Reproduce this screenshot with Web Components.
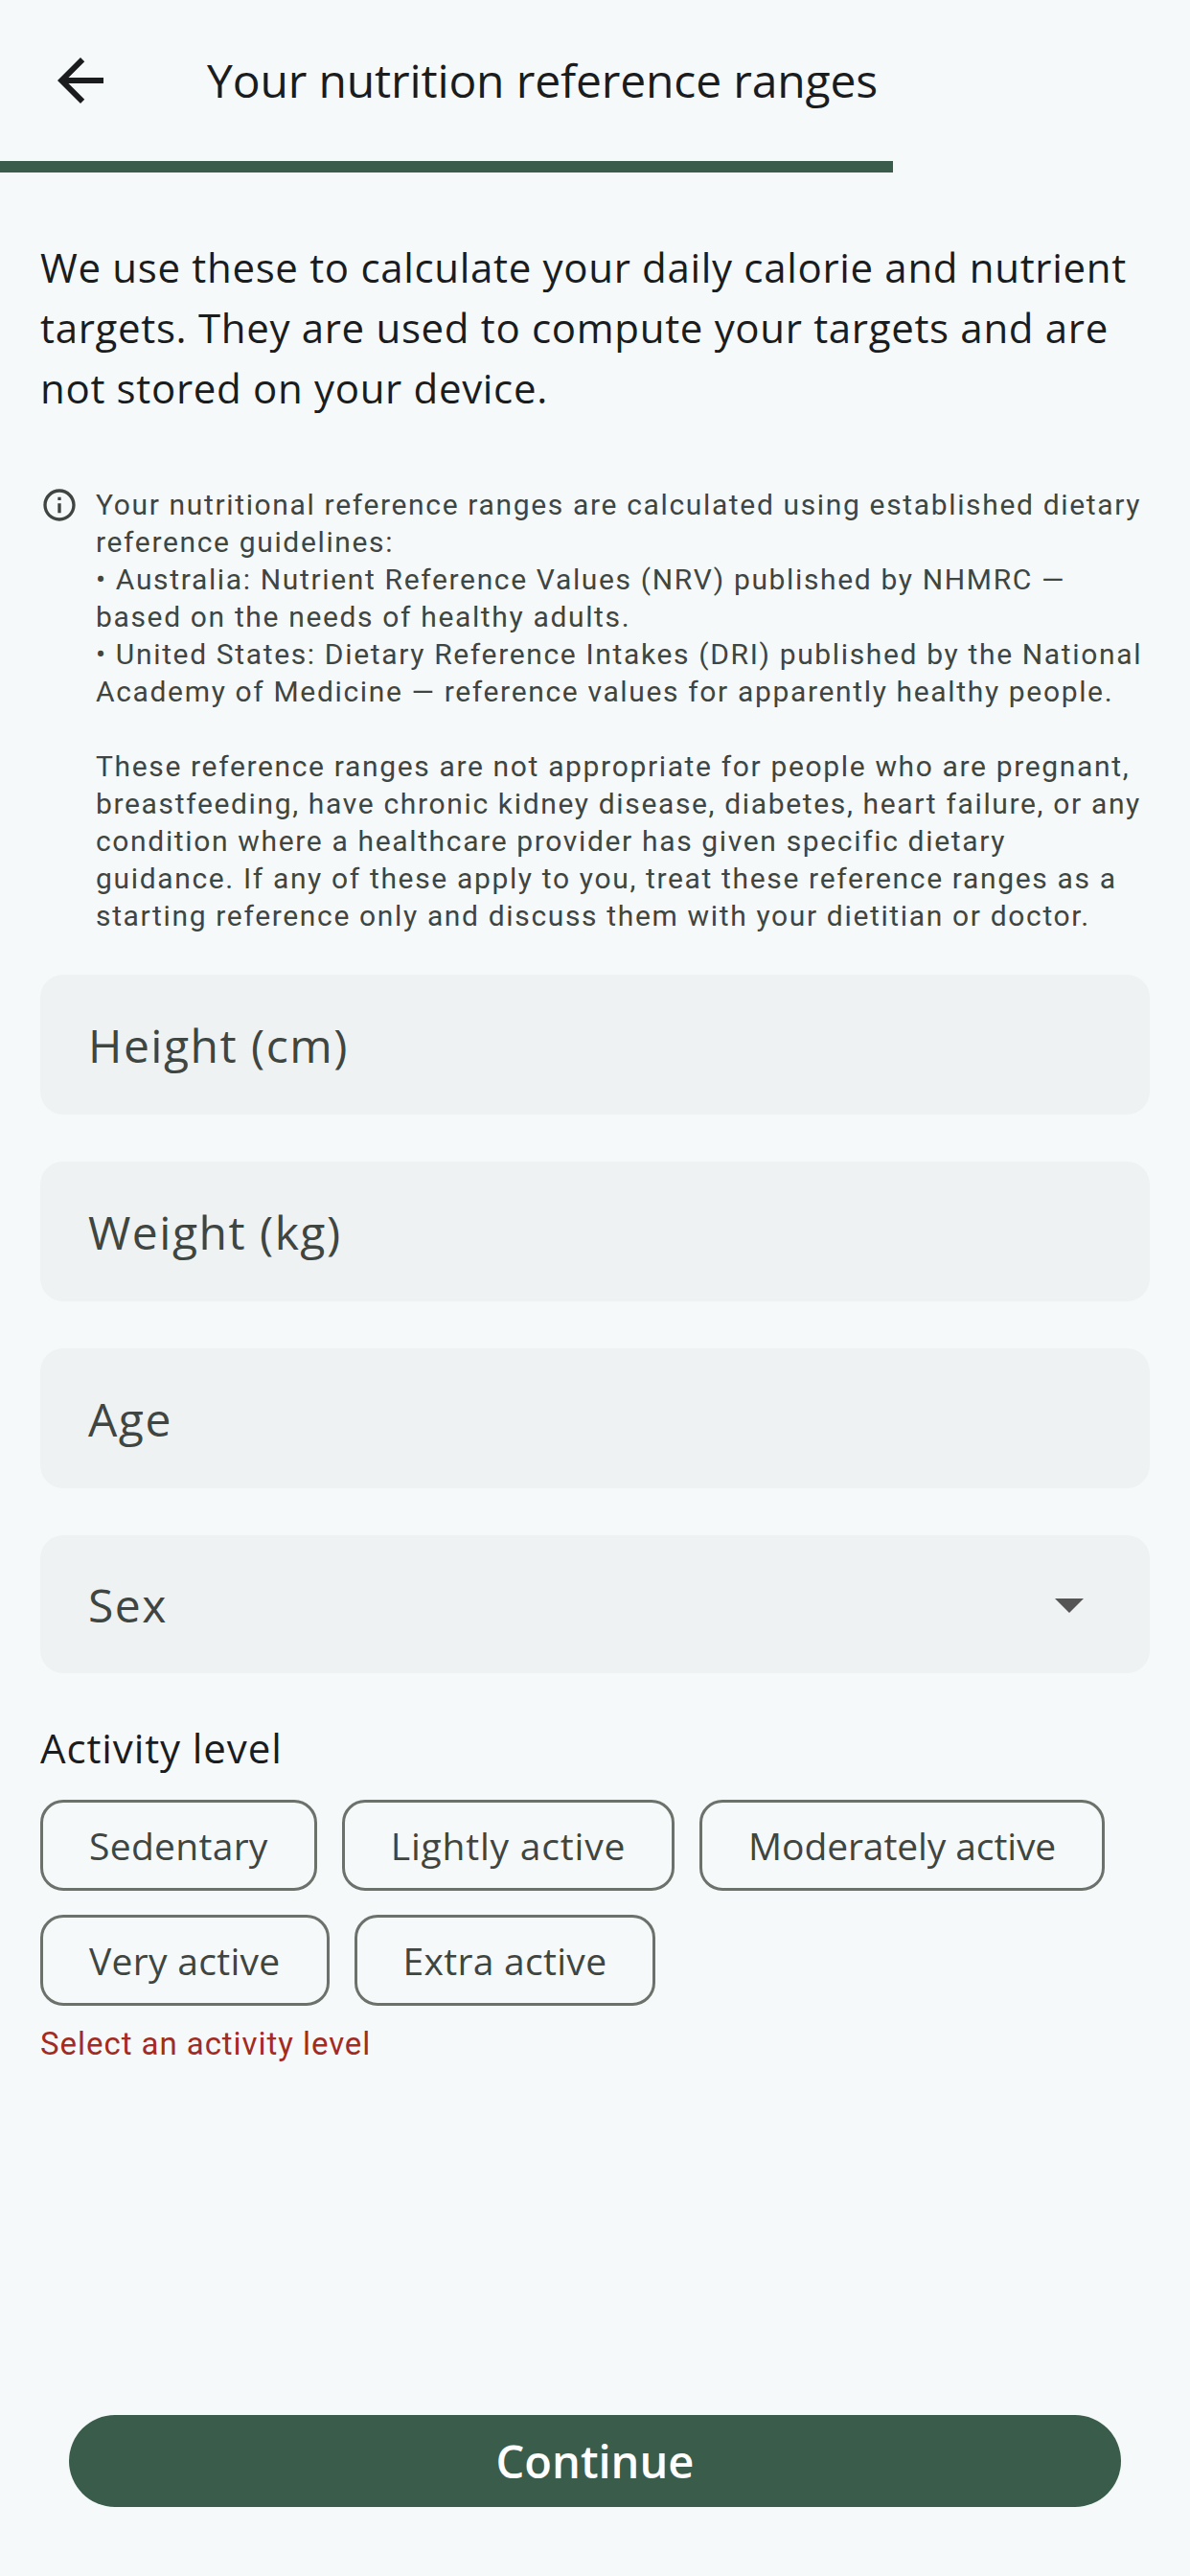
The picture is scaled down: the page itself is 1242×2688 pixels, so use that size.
<!DOCTYPE html>
<html>
<head>
<meta charset="utf-8">
<title>Your nutrition reference ranges</title>
<style>
  html, body { margin: 0; padding: 0; background: #f6f9fa; }
</style>
</head>
<body>
<nutrition-screen>
  <app-bar slot="top">Your nutrition reference ranges</app-bar>
  <progress-line slot="top" value="75"></progress-line>
  <p slot="intro">We use these to calculate your daily calorie and nutrient targets. They are used to compute your targets and are not stored on your device.</p>
  <info-note slot="note">Your nutritional reference ranges are calculated using established dietary reference guidelines:
• Australia: Nutrient Reference Values (NRV) published by NHMRC — based on the needs of healthy adults.
• United States: Dietary Reference Intakes (DRI) published by the National Academy of Medicine — reference values for apparently healthy people.

These reference ranges are not appropriate for people who are pregnant, breastfeeding, have chronic kidney disease, diabetes, heart failure, or any condition where a healthcare provider has given specific dietary guidance. If any of these apply to you, treat these reference ranges as a starting reference only and discuss them with your dietitian or doctor.</info-note>
  <form-field slot="fields">Height (cm)</form-field>
  <form-field slot="fields">Weight (kg)</form-field>
  <form-field slot="fields">Age</form-field>
  <form-field slot="fields" dropdown>Sex</form-field>
  <activity-picker slot="activity" error="Select an activity level">
    <choice-chip>Sedentary</choice-chip>
    <choice-chip style="letter-spacing: 0.8px">Lightly active</choice-chip>
    <choice-chip style="letter-spacing: -0.1px">Moderately active</choice-chip>
    <choice-chip>Very active</choice-chip>
    <choice-chip>Extra active</choice-chip>
  </activity-picker>
  <primary-button slot="action">Continue</primary-button>
</nutrition-screen>
<script>
const HEADING_FONT = '"Open Sans", "Noto Sans", sans-serif'

customElements.define('nutrition-screen', class extends HTMLElement {
  constructor () {
    super()
    this.attachShadow({ mode: 'open' }).innerHTML = `
      <style>
        :host { display: flex; flex-direction: column; min-height: 100vh; box-sizing: border-box; background: #f6f9fa; color: #1a1c1e; }
        .intro { display: block; padding: 0 42px; margin-top: 67px; }
        ::slotted(p) { margin: 0; font: 400 42px/63px ${HEADING_FONT}; letter-spacing: 0.68px; color: #1a1c1e; }
        .note { display: block; margin-top: 71px; padding: 0 42px; }
        .fields { display: flex; flex-direction: column; gap: 49px; padding: 0 42px; margin-top: 42px; }
        .activity { display: block; padding: 0 42px; margin-top: 51px; }
        .action { display: block; margin-top: auto; padding: 0 72px 72px; }
      </style>
      <slot name="top"></slot>
      <div class="intro"><slot name="intro"></slot></div>
      <div class="note"><slot name="note"></slot></div>
      <div class="fields"><slot name="fields"></slot></div>
      <div class="activity"><slot name="activity"></slot></div>
      <div class="action"><slot name="action"></slot></div>
    `
  }
})

customElements.define('app-bar', class extends HTMLElement {
  constructor () {
    super()
    this.attachShadow({ mode: 'open' }).innerHTML = `
      <style>
        :host { display: flex; align-items: center; height: 168px; font: 400 48px/1 ${HEADING_FONT}; letter-spacing: -0.15px; color: #1a1c1e; }
        button { all: unset; display: flex; width: 168px; height: 168px; align-items: center; justify-content: center; }
        svg { width: 72px; height: 72px; fill: currentColor; }
        .title { margin-left: 48px; }
      </style>
      <button aria-label="Back">
        <svg viewBox="0 0 24 24"><path d="M20 11H7.83l5.59-5.59L12 4l-8 8 8 8 1.41-1.41L7.83 13H20v-2z"/></svg>
      </button>
      <span class="title"><slot></slot></span>
    `
  }
})

customElements.define('progress-line', class extends HTMLElement {
  constructor () {
    super()
    this.attachShadow({ mode: 'open' }).innerHTML = `
      <style>
        :host { display: block; height: 12px; }
        div { height: 100%; background: #3a5c4b; }
      </style>
      <div></div>
    `
    this.shadowRoot.querySelector('div').style.width = this.getAttribute('value') + '%'
  }
})

customElements.define('info-note', class extends HTMLElement {
  constructor () {
    super()
    this.attachShadow({ mode: 'open' }).innerHTML = `
      <style>
        :host { display: flex; gap: 18px; font: 400 30px/39px Roboto, sans-serif; letter-spacing: 1.65px; color: #3f4541; }
        svg { flex: none; width: 40px; height: 40px; fill: currentColor; }
        .text { white-space: pre-line; }
      </style>
      <svg viewBox="0 0 24 24"><path d="M11 7h2v2h-2zm0 4h2v6h-2zm1-9C6.48 2 2 6.48 2 12s4.48 10 10 10 10-4.48 10-10S17.52 2 12 2zm0 18c-4.41 0-8-3.59-8-8s3.59-8 8-8 8 3.59 8 8-3.59 8-8 8z"/></svg>
      <div class="text"><slot></slot></div>
    `
  }
})

customElements.define('form-field', class extends HTMLElement {
  constructor () {
    super()
    const dropdown = this.hasAttribute('dropdown')
    this.attachShadow({ mode: 'open' }).innerHTML = `
      <style>
        :host { display: flex; align-items: center; justify-content: space-between; height: ${dropdown ? 144 : 146}px; box-sizing: border-box; padding: 0 48px 0 50px; background: #eef2f3; border-radius: 24px; font: 400 48px/1 ${HEADING_FONT}; letter-spacing: 1.5px; color: #3f4541; }
        span { padding-top: 2px; }
        svg { width: 72px; height: 72px; fill: #555; }
      </style>
      <span><slot></slot></span>
      ${dropdown ? '<svg viewBox="0 0 24 24"><path d="M7 10l5 5 5-5z"/></svg>' : ''}
    `
  }
})

customElements.define('activity-picker', class extends HTMLElement {
  constructor () {
    super()
    this.attachShadow({ mode: 'open' }).innerHTML = `
      <style>
        :host { display: block; }
        h2 { margin: 0; font: 400 42px/54px ${HEADING_FONT}; letter-spacing: 0.9px; color: #1a1c1e; }
        .chips { display: flex; flex-wrap: wrap; gap: 25px 26px; margin-top: 27px; }
        .error { margin-top: 19px; font: 400 33px/42px Roboto, sans-serif; letter-spacing: 0.95px; color: #a32b22; }
      </style>
      <h2>Activity level</h2>
      <div class="chips"><slot></slot></div>
      <div class="error"></div>
    `
    this.shadowRoot.querySelector('.error').textContent = this.getAttribute('error')
  }
})

customElements.define('choice-chip', class extends HTMLElement {
  constructor () {
    super()
    this.attachShadow({ mode: 'open' }).innerHTML = `
      <style>
        :host { display: inline-flex; align-items: center; height: 95px; box-sizing: border-box; padding: 0 48px; border: 3px solid #6b716b; border-radius: 24px; font: 400 39px/1 ${HEADING_FONT}; letter-spacing: 0.3px; color: #3f4541; }
      </style>
      <slot></slot>
    `
  }
})

customElements.define('primary-button', class extends HTMLElement {
  constructor () {
    super()
    this.attachShadow({ mode: 'open' }).innerHTML = `
      <style>
        :host { display: flex; align-items: center; justify-content: center; height: 96px; border-radius: 48px; background: #3a5c4b; color: #fff; font: 600 47px/1 ${HEADING_FONT}; }
      </style>
      <slot></slot>
    `
  }
})
</script>
</body>
</html>
